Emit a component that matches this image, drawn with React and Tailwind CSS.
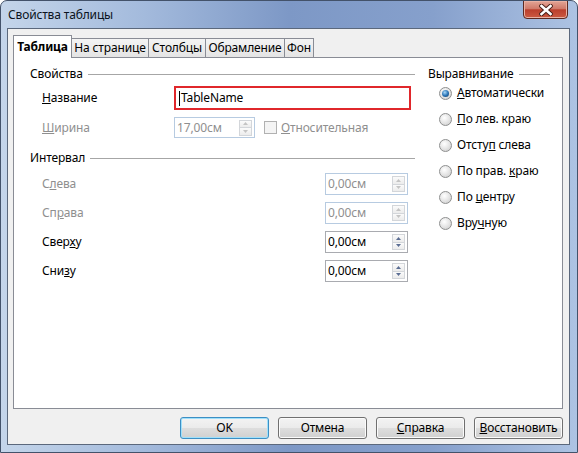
import React from 'react'

function Mn({ text, at }) {
  if (at < 0) return <>{text}</>
  return (
    <>
      {text.slice(0, at)}
      <u>{text[at]}</u>
      {text.slice(at + 1)}
    </>
  )
}

function Arrow({ up, disabled }) {
  const fill = disabled ? '#c4c4c4' : '#5a6d93'
  return (
    <svg width="5" height="3" viewBox="0 0 5 3">
      <path d={up ? 'M0 3 L2.5 0 L5 3 Z' : 'M0 0 L2.5 3 L5 0 Z'} fill={fill} />
    </svg>
  )
}

function Spin({ value, disabled, className }) {
  return (
    <div
      className={`flex items-center border bg-white pl-[2px] pr-[2px] ${
        disabled ? 'border-[#b7cbe1] text-[#8f8f8f]' : 'border-[#a9abb0] text-black'
      } ${className}`}
    >
      <span className="flex-1 leading-none">{value}</span>
      <div className="flex h-[16px] w-[13px] flex-col border border-[#d3d6da]">
        <div className="flex flex-1 items-center justify-center border-b border-[#d3d6da] bg-[linear-gradient(#fbfbfb,#ececec)]">
          <Arrow up disabled={disabled} />
        </div>
        <div className="flex flex-1 items-center justify-center bg-[linear-gradient(#fbfbfb,#ececec)]">
          <Arrow disabled={disabled} />
        </div>
      </div>
    </div>
  )
}

function Header({ title }) {
  return (
    <div className="flex h-[16px] items-center gap-[5px]">
      <span className="leading-none">{title}</span>
      <div className="h-px flex-1 bg-[#a6a6a6]" />
    </div>
  )
}

function Radio({ checked }) {
  return (
    <div className="flex h-[13px] w-[13px] items-center justify-center rounded-full border border-[#8e8f8f] bg-[radial-gradient(circle_at_40%_35%,#ffffff_0%,#e8e8e8_45%,#c9c9c9_100%)]">
      {checked && (
        <div className="h-[7px] w-[7px] rounded-full bg-[radial-gradient(circle_at_40%_35%,#a8d8f8_0%,#2d77b8_50%,#12385f_100%)]" />
      )}
    </div>
  )
}

function Button({ children, focused }) {
  return (
    <div
      className={`flex h-[22px] w-[89px] items-center justify-center rounded-[3px] border bg-[linear-gradient(#f3f3f3_0%,#ebebeb_48%,#dddddd_52%,#d0d0d0_100%)] ${
        focused ? 'border-[#3c8fc4] shadow-[inset_0_0_0_1px_#9fe0fb]' : 'border-[#707070] shadow-[inset_0_0_0_1px_#fbfbfb]'
      }`}
    >
      {children}
    </div>
  )
}

const tabs = [
  { label: 'На странице', w: 'w-[78px]' },
  { label: 'Столбцы', w: 'w-[58px]' },
  { label: 'Обрамление', w: 'w-[80px]' },
  { label: 'Фон', w: 'w-[30px]' },
]

const spacing = [
  { label: 'Слева', at: 1, disabled: true },
  { label: 'Справа', at: 2, disabled: true },
  { label: 'Сверху', at: 4, disabled: false },
  { label: 'Снизу', at: 3, disabled: false },
]

const aligns = [
  { label: 'Автоматически', at: 0, checked: true },
  { label: 'По лев. краю', at: 0 },
  { label: 'Отступ слева', at: 5 },
  { label: 'По прав. краю', at: 9 },
  { label: 'По центру', at: 3 },
  { label: 'Вручную', at: 3 },
]

export default function App() {
  return (
    <div className="flex h-[453px] w-[578px] flex-col overflow-hidden rounded-t-[7px] border border-[#43526a] bg-[linear-gradient(90deg,#c4d5ea_0%,#a3badc_25%,#7d98c6_50%,#86a0cc_75%,#adc3e3_100%)] font-['Noto_Sans',sans-serif] text-[12px] tracking-[-0.15px] text-black">
      {/* title bar */}
      <div className="flex h-[27px] items-start justify-between">
        <span className="pl-[7px] pt-[6px] leading-[16px] text-[#0b1320]">Свойства таблицы</span>
        <div className="-mt-px mr-[9px] flex h-[19px] w-[45px] items-center justify-center rounded-b-[4px] border border-[#5d2a22] bg-[linear-gradient(#e3a596_0%,#d07a6a_45%,#bb3f2d_52%,#cc5a42_100%)] shadow-[inset_0_0_0_1px_#e9b1a3]">
          <svg width="14" height="12" viewBox="0 0 14 12">
            <path d="M2.5 2 L11.5 10 M11.5 2 L2.5 10" stroke="#4a2019" strokeWidth="4.5" strokeLinecap="square" />
            <path d="M2.5 2 L11.5 10 M11.5 2 L2.5 10" stroke="#ffffff" strokeWidth="2.6" strokeLinecap="square" />
          </svg>
        </div>
      </div>

      {/* client area */}
      <div className="mb-[7px] ml-[6px] mr-[7px] flex flex-1 flex-col border border-[#5b687c] bg-[#f0f0f0] pb-[5px] pl-[5px] pr-[6px] pt-[6px]">
        {/* tabs */}
        <div className="flex h-[22px] items-end">
          <div className="relative z-10 -mb-px flex h-[23px] w-[59px] items-center justify-center border border-b-0 border-[#898c95] bg-white font-bold">
            Таблица
          </div>
          {tabs.map((t) => (
            <div
              key={t.label}
              className={`-ml-px flex h-[19px] items-center justify-center border border-b-0 border-[#898c95] bg-[linear-gradient(#f4f4f4,#e4e4e4)] ${t.w}`}
            >
              {t.label}
            </div>
          ))}
        </div>

        {/* tab panel */}
        <div className="flex h-[352px] gap-[13px] border border-[#898c95] bg-white pl-[16px] pt-[8px]">
          {/* left column */}
          <div className="flex w-[385px] flex-col">
            <Header title="Свойства" />
            <div className="mt-[4px] flex h-[24px] items-center pl-[12px]">
              <span className="w-[132px]">
                <Mn text="Название" at={0} />
              </span>
              <div className="flex h-[24px] w-[237px] items-center border-2 border-[#e0272b] bg-white pl-[3px]">
                <span className="mr-px h-[15px] w-px bg-black" />
                <span>TableName</span>
              </div>
            </div>
            <div className="mt-[7px] flex h-[21px] items-center pl-[12px] text-[#8f8f8f]">
              <span className="w-[132px]">
                <Mn text="Ширина" at={0} />
              </span>
              <Spin value="17,00см" disabled className="h-[21px] w-[81px]" />
              <div className="ml-[9px] h-[13px] w-[13px] border border-[#b1b1b1] bg-[#f4f4f4]" />
              <span className="ml-[4px]">
                <Mn text="Относительная" at={0} />
              </span>
            </div>

            <div className="mt-[12px]">
              <Header title="Интервал" />
            </div>
            <div className="mt-[7px] flex flex-col gap-[7px]">
              {spacing.map((s) => (
                <div key={s.label} className="flex h-[22px] items-center pl-[12px]">
                  <span className={`w-[283px] ${s.disabled ? 'text-[#8f8f8f]' : 'text-black'}`}>
                    <Mn text={s.label} at={s.at} />
                  </span>
                  <Spin value="0,00см" disabled={s.disabled} className="h-[22px] w-[83px]" />
                </div>
              ))}
            </div>
          </div>

          {/* right column */}
          <div className="flex w-[122px] flex-col">
            <Header title="Выравнивание" />
            <div className="mt-[2px] flex flex-col gap-[8px] pl-[11px]">
              {aligns.map((a) => (
                <div key={a.label} className="flex h-[18px] items-center gap-[5px]">
                  <Radio checked={a.checked} />
                  <span className="whitespace-nowrap">
                    <Mn text={a.label} at={a.at} />
                  </span>
                </div>
              ))}
            </div>
          </div>
        </div>

        {/* buttons */}
        <div className="mt-[8px] flex justify-end gap-[9px]">
          <Button focused>OK</Button>
          <Button>Отмена</Button>
          <Button>
            <Mn text="Справка" at={0} />
          </Button>
          <Button>
            <Mn text="Восстановить" at={0} />
          </Button>
        </div>
      </div>
    </div>
  )
}
